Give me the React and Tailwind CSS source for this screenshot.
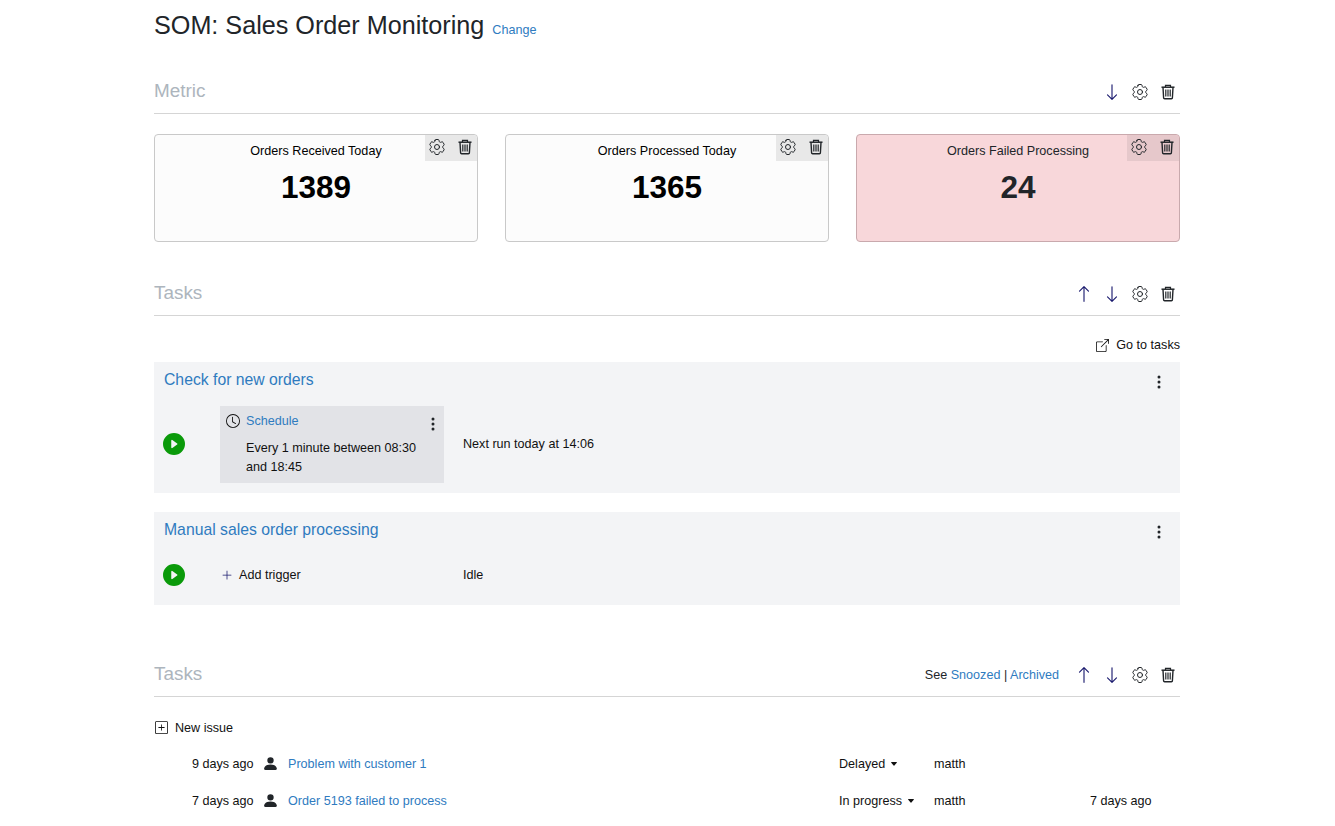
import React from 'react';
import { BsArrowDown, BsArrowUp, BsBoxArrowUpRight, BsCaretDownFill, BsClock, BsPersonFill, BsPlayCircleFill, BsPlusLg, BsPlusSquare, BsThreeDotsVertical } from 'react-icons/bs';
import { HiOutlineCog6Tooth } from 'react-icons/hi2';

const metrics = [
  { title: 'Orders Received Today', value: '1389' },
  { title: 'Orders Processed Today', value: '1365' },
  { title: 'Orders Failed Processing', value: '24', failed: true },
];

const Gear = () => <HiOutlineCog6Tooth size={20} strokeWidth={1.2} className="text-[#212529]" />;

// trash can with handle and three bars, none of the icon sets has this exact one
const Trash = () => (
  <svg width="16" height="16" viewBox="0 0 16 16" fill="none" stroke="#212529" strokeWidth="1.2">
    <path d="M1.5 3.2h13" strokeWidth="1.5" />
    <path d="M5.5 3V1.4h5V3" />
    <path d="M3 3.4l.6 10.4c0 .6.4 1 1 1h6.8c.6 0 1-.4 1-1L13 3.4" strokeWidth="1.4" />
    <path d="M5.8 5.5v7M8 5.5v7M10.2 5.5v7" />
  </svg>
);

const IconBox = ({ children }) => <span className="w-[28px] flex justify-center">{children}</span>;

const SectionHeader = ({ title, up, down, children, className = '' }) => (
  <div className={`flex h-[39px] border-b border-[#d5d5d5] ${className}`}>
    <h2 className="text-[18.9px] leading-[32px] text-[#adb5bd] flex-1">{title}</h2>
    <div className="flex items-center h-[34px] mr-[-2px] text-[#212529]">
      {children}
      {up && <IconBox><BsArrowUp size={18} className="text-[#1a1a6e]" /></IconBox>}
      {down && <IconBox><BsArrowDown size={18} className="text-[#1a1a6e]" /></IconBox>}
      <IconBox><Gear /></IconBox>
      <IconBox><Trash /></IconBox>
    </div>
  </div>
);

const MetricCard = ({ title, value, failed }) => (
  <div className={`relative h-[108px] rounded border text-center ${failed ? 'bg-[#f8d7da] border-[#c9a9ad] text-[#212529]' : 'bg-[#fcfcfc] border-[#c9c9c9] text-black'}`}>
    <div className="mt-[7px] leading-[18px]">{title}</div>
    <div className="text-[31.5px] font-bold leading-[38px] mt-[8px]">{value}</div>
    <div className={`absolute top-0 right-0 w-[52px] h-[26px] flex items-center justify-between pl-[2px] pr-[4px] pb-[3px] rounded-tr ${failed ? 'bg-[#e6c8cb]' : 'bg-[#e8e8e8]'}`}>
      <Gear />
      <Trash />
    </div>
  </div>
);

const Link = ({ children, className = '' }) => <a className={`text-[#2f7bbf] ${className}`}>{children}</a>;

const Dots = ({ className = '' }) => <BsThreeDotsVertical size={16} className={`text-[#212529] ${className}`} />;

const Play = () => <BsPlayCircleFill size={22} className="text-[#0a9a0a] ml-[-1px] mt-[-1px] shrink-0" />;

const issues = [
  { age: '9 days ago', title: 'Problem with customer 1', status: 'Delayed', user: 'matth', updated: '' },
  { age: '7 days ago', title: 'Order 5193 failed to process', status: 'In progress', user: 'matth', updated: '7 days ago' },
];

export default function App() {
  return (
    <div className="font-['Liberation_Sans',Arial,sans-serif] text-[12.6px] text-[#111] bg-white h-[826px] overflow-hidden">
      <div className="w-[1026px] ml-[154px]">
        <div className="flex items-baseline pt-[10px] h-[75px]">
          <h1 className="text-[25.2px] leading-[30px] text-[#212529]">SOM: Sales Order Monitoring</h1>
          <Link className="ml-2">Change</Link>
        </div>

        <SectionHeader title="Metric" down />

        <div className="grid grid-cols-3 gap-[27px] mt-[20px]">
          {metrics.map(m => <MetricCard key={m.title} {...m} />)}
        </div>

        <SectionHeader title="Tasks" up down className="mt-[35px]" />

        <div className="flex items-center justify-end h-[18px] mt-[20px] mb-[8px]">
          <BsBoxArrowUpRight size={13} className="mr-[7px]" />
          <span>Go to tasks</span>
        </div>

        <div className="bg-[#f3f4f6] h-[131px] px-[10px] pt-[8px]">
          <div className="flex items-center justify-between">
            <Link className="text-[15.75px] leading-[20px]">Check for new orders</Link>
            <Dots className="mr-[3px] mt-1" />
          </div>
          <div className="flex items-center mt-[16px]">
            <Play />
            <div className="relative bg-[#e2e3e7] w-[224px] h-[77px] ml-[35px] px-[6px] pt-[6px]">
              <div className="flex items-center">
                <BsClock size={14} className="mr-[6px]" />
                <Link>Schedule</Link>
              </div>
              <div className="ml-[20px] mr-[10px] mt-[8px] leading-[19px]">Every 1 minute between 08:30 and 18:45</div>
              <Dots className="absolute right-[3px] top-[10px]" />
            </div>
            <span className="ml-[19px]">Next run today at 14:06</span>
          </div>
        </div>

        <div className="bg-[#f3f4f6] h-[93px] px-[10px] pt-[8px] mt-[19px]">
          <div className="flex items-center justify-between">
            <Link className="text-[15.75px] leading-[20px]">Manual sales order processing</Link>
            <Dots className="mr-[3px] mt-1" />
          </div>
          <div className="flex items-center mt-[25px]">
            <Play />
            <div className="flex items-center w-[224px] ml-[35px]">
              <BsPlusLg size={12} className="text-[#1a1a6e] ml-[1px] mr-[6px]" />
              <span>Add trigger</span>
            </div>
            <span className="ml-[19px]">Idle</span>
          </div>
        </div>

        <SectionHeader title="Tasks" up down className="mt-[53px]">
          <span className="mr-[11px]">See <Link>Snoozed</Link> | <Link>Archived</Link></span>
        </SectionHeader>

        <div className="flex items-center mt-[22px] h-[18px]">
          <BsPlusSquare size={13} className="mr-[7px] ml-[1px] mt-[-1px]" />
          <span>New issue</span>
        </div>

        <div className="mt-[9px]">
          {issues.map(i => (
            <div key={i.title} className="flex items-center h-[37px]">
              <span className="ml-[38px] w-[70px]">{i.age}</span>
              <BsPersonFill size={17} className="text-[#212529] mr-[9px] mt-[-2px]" />
              <Link className="w-[551px]">{i.title}</Link>
              <span className="w-[95px] flex items-center">
                {i.status}
                <BsCaretDownFill size={8} className="ml-[5px]" />
              </span>
              <span className="w-[156px]">{i.user}</span>
              <span>{i.updated}</span>
            </div>
          ))}
        </div>
      </div>
    </div>
  );
}
